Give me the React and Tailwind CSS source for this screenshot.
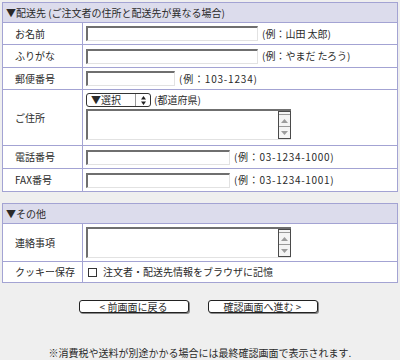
import React from "react";

const line = "border-[#a3a3d3]";

function TextBox({ w }) {
  return (
    <div
      className={`${w} h-[15px] bg-white border-t-2 border-l-2 border-t-[#6f6f6f] border-l-[#6f6f6f] border-b border-r border-b-[#e2e2e2] border-r-[#e2e2e2]`}
    />
  );
}

function Scroll() {
  return (
    <div className="w-[13px] h-full flex flex-col border border-[#4a4a4a] bg-[#f4f4f4]">
      <div className="h-[3px] border-b border-[#9a9a9a]" />
      <div className="flex-1 flex items-center justify-center border-b border-[#9a9a9a]">
        <svg width="7" height="4" viewBox="0 0 7 4">
          <path d="M3.5 0 L7 4 L0 4 Z" fill="#9c9c9c" />
        </svg>
      </div>
      <div className="flex-1 flex items-center justify-center">
        <svg width="7" height="4" viewBox="0 0 7 4">
          <path d="M0 0 L7 0 L3.5 4 Z" fill="#9c9c9c" />
        </svg>
      </div>
    </div>
  );
}

function TextArea() {
  return (
    <div className="w-[205px] h-[31px] flex bg-white border-t-2 border-l-2 border-t-[#6f6f6f] border-l-[#6f6f6f] border-b border-b-[#e2e2e2]">
      <div className="flex-1" />
      <Scroll />
    </div>
  );
}

function Row({ label, h, children, last }) {
  return (
    <div className={`grid grid-cols-[80px_1fr] ${h} ${last ? "" : `border-b ${line}`}`}>
      <div className={`border-r ${line} flex items-center pl-[12px]`}>{label}</div>
      <div className="pl-[3px] flex items-center gap-[4px]">{children}</div>
    </div>
  );
}

function Header({ children }) {
  return (
    <div className={`h-[20px] bg-[#dcdcec] border-b ${line} flex items-center pl-[3px]`}>
      {children}
    </div>
  );
}

export default function App() {
  return (
    <div className="w-[400px] h-[360px] bg-[#efefef] pt-[2px] px-[2px] text-[10px] leading-none text-[#2a2a2a] font-['Noto_Sans_CJK_JP',sans-serif]">
      <div className={`w-[396px] border ${line} bg-white`}>
        <Header>▼配送先 (ご注文者の住所と配送先が異なる場合)</Header>
        <Row label="お名前" h="h-[22px]">
          <TextBox w="w-[172px]" />
          <span>(例：山田 太郎)</span>
        </Row>
        <Row label="ふりがな" h="h-[23px]">
          <TextBox w="w-[172px]" />
          <span>(例：やまだ たろう)</span>
        </Row>
        <Row label="郵便番号" h="h-[22px]">
          <TextBox w="w-[89px]" />
          <span className="tracking-[0.8px]">(例：103-1234)</span>
        </Row>
        <Row label="ご住所" h="h-[56px]">
          <div className="flex flex-col gap-[2px] self-start pt-[3px]">
            <div className="flex items-center gap-[3px]">
              <div className="w-[65px] h-[14px] flex border border-[#333] rounded-[3px] bg-white">
                <div className="flex-1 flex items-center pl-[4px]">▼選択</div>
                <div className="w-[15px] border-l border-[#999] flex items-center justify-center">
                  <svg width="5" height="9" viewBox="0 0 5 9">
                    <path d="M2.5 0 L5 3.5 L0 3.5 Z M0 5.5 L5 5.5 L2.5 9 Z" fill="#222" />
                  </svg>
                </div>
              </div>
              <span>(都道府県)</span>
            </div>
            <TextArea />
          </div>
        </Row>
        <Row label="電話番号" h="h-[23px]">
          <TextBox w="w-[144px]" />
          <span className="tracking-[0.7px]">(例：03-1234-1000)</span>
        </Row>
        <Row label="FAX番号" h="h-[22px]" last>
          <TextBox w="w-[144px]" />
          <span className="tracking-[0.7px]">(例：03-1234-1001)</span>
        </Row>
      </div>

      <div className={`w-[396px] mt-[11px] border ${line} bg-white`}>
        <Header>▼その他</Header>
        <Row label="連絡事項" h="h-[38px]">
          <TextArea />
        </Row>
        <Row label="クッキー保存" h="h-[20px]" last>
          <div className="flex items-center gap-[6px] pl-[2px]">
            <div className="w-[9px] h-[9px] border border-[#333] bg-white" />
            <span>注文者・配送先情報をブラウザに記憶</span>
          </div>
        </Row>
      </div>

      <div className="flex justify-center gap-[19px] mt-[17px] pr-[4px]">
        <div className="w-[110px] h-[13px] border border-[#222] rounded-[3px] bg-white flex items-center justify-center shadow-[1px_1px_0_#888]">
          &lt; 前画面に戻る
        </div>
        <div className="w-[110px] h-[13px] border border-[#222] rounded-[3px] bg-white flex items-center justify-center shadow-[1px_1px_0_#888]">
          確認画面へ進む &gt;
        </div>
      </div>

      <p className="mt-[35px] text-center">
        ※消費税や送料が別途かかる場合には最終確認画面で表示されます.
      </p>
    </div>
  );
}
